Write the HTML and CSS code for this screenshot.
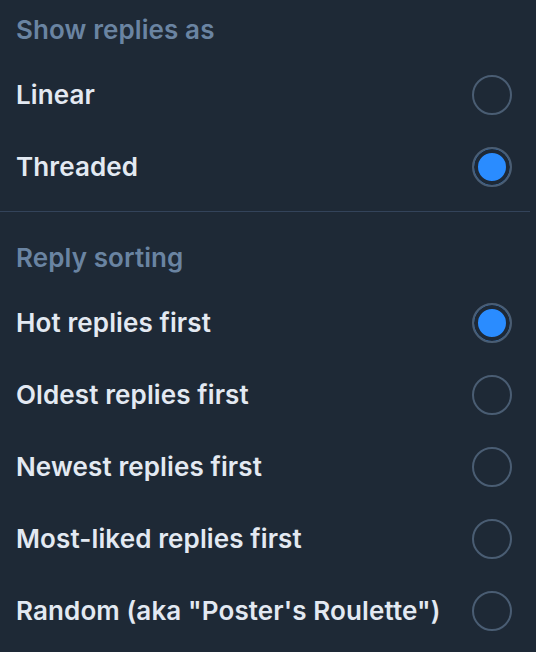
FILE: index.html
```html
<!DOCTYPE html>
<html>
<head>
<meta charset="utf-8">
<link rel="stylesheet" href="styles.css">
</head>
<body>
<div class="panel">
  <section class="group">
    <div class="heading">Show replies as</div>
    <div class="row"><span class="label">Linear</span><span class="radio"></span></div>
    <div class="row"><span class="label">Threaded</span><span class="radio on"></span></div>
  </section>
  <div class="divider"></div>
  <section class="group">
    <div class="heading">Reply sorting</div>
    <div class="row"><span class="label">Hot replies first</span><span class="radio on"></span></div>
    <div class="row"><span class="label">Oldest replies first</span><span class="radio"></span></div>
    <div class="row"><span class="label">Newest replies first</span><span class="radio"></span></div>
    <div class="row"><span class="label">Most-liked replies first</span><span class="radio"></span></div>
    <div class="row"><span class="label">Random (aka "Poster's Roulette")</span><span class="radio"></span></div>
  </section>
</div>
</body>
</html>
```

FILE: styles.css
```css
html, body {
  margin: 0;
  padding: 0;
  background: #1e2936;
}
body {
  width: 536px;
  height: 652px;
  overflow: hidden;
  font-family: Inter, "Noto Sans", sans-serif;
  -webkit-font-smoothing: antialiased;
}
.panel {
  display: flex;
  flex-direction: column;
}
.group {
  display: flex;
  flex-direction: column;
  padding: 0 24px 0 16px;
}
.heading {
  height: 59px;
  display: flex;
  align-items: center;
  font-size: 26px;
  font-weight: 600;
  letter-spacing: 0.1px;
  color: #6a84a2;
}
.row {
  height: 72px;
  display: flex;
  align-items: center;
  justify-content: space-between;
}
.label {
  font-size: 26px;
  font-weight: 600;
  letter-spacing: 0.12px;
  color: #e3e9f2;
  margin-bottom: 2px;
}
.radio {
  width: 40px;
  height: 40px;
  box-sizing: border-box;
  border: 2px solid #4a5d73;
  border-radius: 50%;
  flex: none;
}
.radio.on {
  background: #2a8cff;
  box-shadow: inset 0 0 0 4px #1e2936;
}
.divider {
  height: 1px;
  width: 530px;
  background: #33435a;
  margin: 8px 0 16px;
}
```
